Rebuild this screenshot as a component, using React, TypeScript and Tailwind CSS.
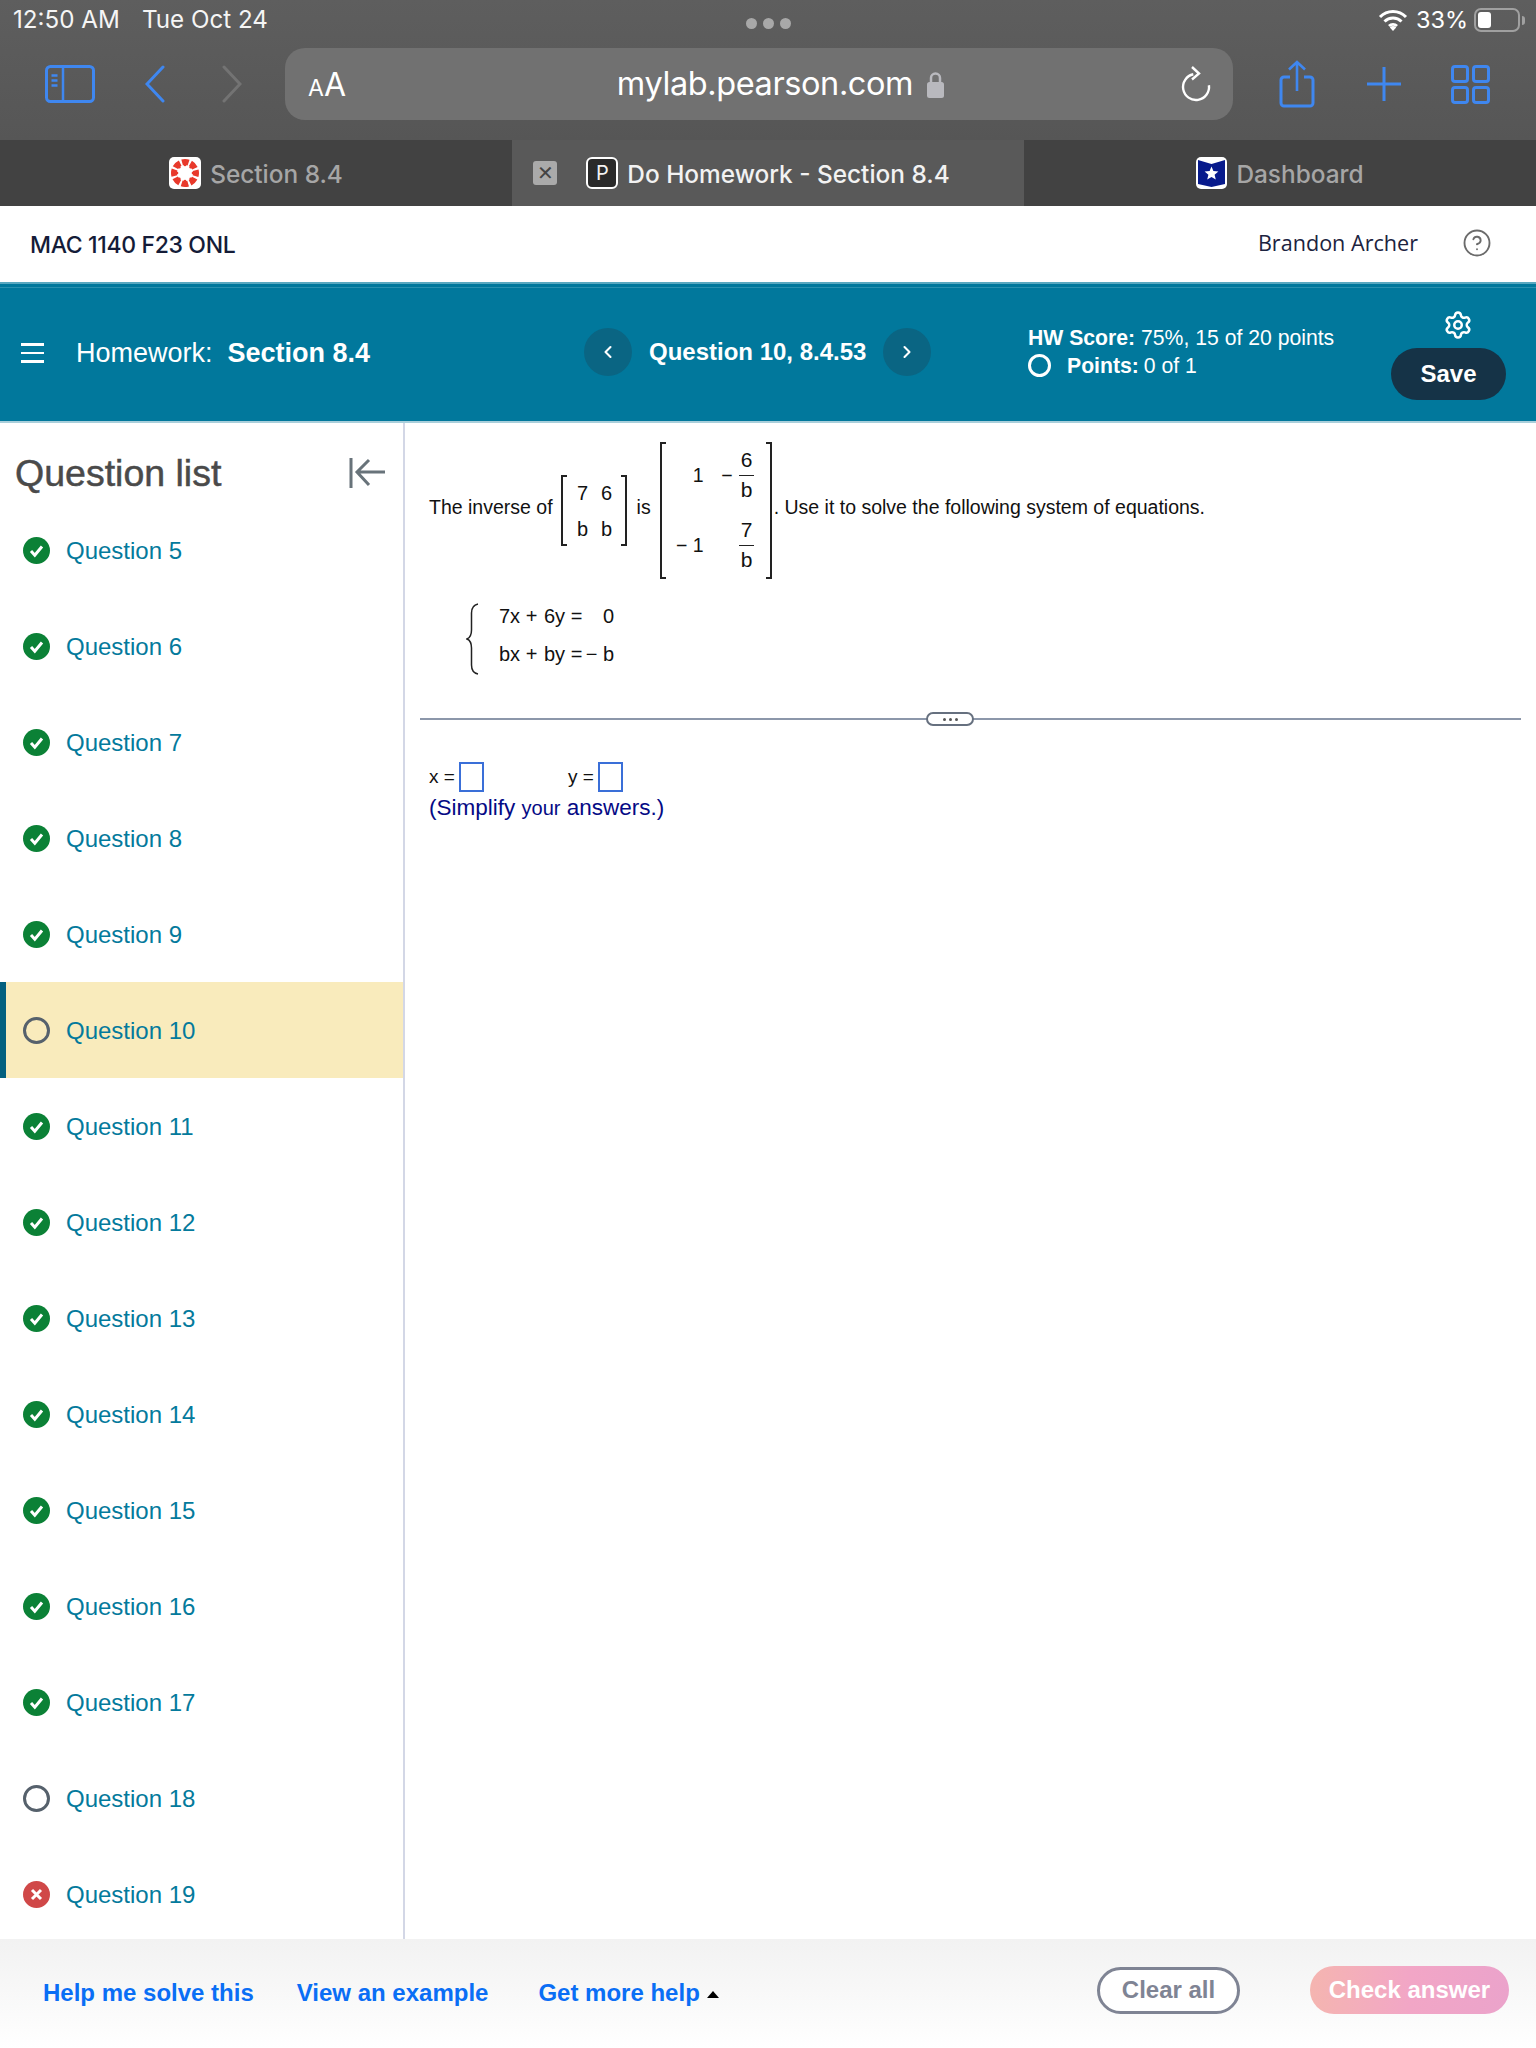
import { ChevronLeft, ChevronRight, CircleHelp, Settings } from "lucide-react";

const questions = [
  { n: 5, status: "done" },
  { n: 6, status: "done" },
  { n: 7, status: "done" },
  { n: 8, status: "done" },
  { n: 9, status: "done" },
  { n: 10, status: "open", current: true },
  { n: 11, status: "done" },
  { n: 12, status: "done" },
  { n: 13, status: "done" },
  { n: 14, status: "done" },
  { n: 15, status: "done" },
  { n: 16, status: "done" },
  { n: 17, status: "done" },
  { n: 18, status: "open" },
  { n: 19, status: "wrong" },
];

const StatusIcon = ({ status }: { status: string }) => {
  if (status === "done") {
    return (
      <svg width="27" height="27" viewBox="0 0 27 27" className="shrink-0">
        <circle cx="13.5" cy="13.5" r="13.5" fill="#0b8136" />
        <path d="M8 14l3.8 4.2L19 9.5" fill="none" stroke="#fff" strokeWidth="3" />
      </svg>
    );
  }
  if (status === "wrong") {
    return (
      <svg width="27" height="27" viewBox="0 0 27 27" className="shrink-0">
        <circle cx="13.5" cy="13.5" r="13.5" fill="#d04848" />
        <path d="M9 9l9 9M18 9l-9 9" fill="none" stroke="#fff" strokeWidth="3" />
      </svg>
    );
  }
  return (
    <svg width="27" height="27" viewBox="0 0 27 27" className="shrink-0">
      <circle cx="13.5" cy="13.5" r="12" fill="none" stroke="#56616c" strokeWidth="3" />
    </svg>
  );
};

const CanvasIcon = () => (
  <div className="w-[32px] h-[32px] rounded-[5px] bg-white flex items-center justify-center">
    <svg width="30" height="30" viewBox="0 0 30 30">
      <circle cx="15" cy="15" r="11" fill="none" stroke="#e8392b" strokeWidth="6" strokeDasharray="6.6 2.04" strokeDashoffset="3.3" />
      <circle cx="15" cy="7" r="1.3" fill="#e8392b" />
      <circle cx="15" cy="23" r="1.3" fill="#e8392b" />
      <circle cx="7" cy="15" r="1.3" fill="#e8392b" />
      <circle cx="23" cy="15" r="1.3" fill="#e8392b" />
      <circle cx="9.3" cy="9.3" r="1.3" fill="#e8392b" />
      <circle cx="20.7" cy="9.3" r="1.3" fill="#e8392b" />
      <circle cx="9.3" cy="20.7" r="1.3" fill="#e8392b" />
      <circle cx="20.7" cy="20.7" r="1.3" fill="#e8392b" />
    </svg>
  </div>
);

const DashboardIcon = () => (
  <div className="w-[31px] h-[32px] rounded-[5px] bg-white flex items-center justify-center">
    <svg width="31" height="32" viewBox="0 0 31 32">
      <path d="M2 3l13.5 4L29 3v24l-13.5 3L2 27z" fill="#071a8c" />
      <path d="M15.5 9.5l1.9 4.6 5 .4-3.8 3.2 1.2 4.8-4.3-2.6-4.3 2.6 1.2-4.8-3.8-3.200 5-.4z" fill="#fff" />
    </svg>
  </div>
);

const Matrix2x2 = () => (
  <div className="flex h-[71px] w-[66px] shrink-0 text-[20px]">
    <div className="w-[6px] border-l-2 border-y-2 border-[#222]" />
    <div className="flex-1 pl-[2px] grid grid-cols-[24px_24px] auto-rows-[36px] content-center justify-center place-items-center">
      <span>7</span>
      <span>6</span>
      <span>b</span>
      <span>b</span>
    </div>
    <div className="w-[6px] border-r-2 border-y-2 border-[#222]" />
  </div>
);

const Frac = ({ top }: { top: string }) => (
  <span className="flex flex-col items-center w-[16px]">
    <span className="leading-[24px] mb-[3px] text-[21px]">{top}</span>
    <span className="w-[15px] h-[1.5px] bg-[#222]" />
    <span className="leading-[27px] text-[21px]">b</span>
  </span>
);

const MatrixInverse = () => (
  <div className="flex h-[137px] w-[112px] shrink-0">
    <div className="w-[6px] border-l-2 border-y-2 border-[#222]" />
    <div className="flex-1 grid grid-cols-[38px_51px] auto-rows-[70px] content-center pr-[11px]">
      <span className="flex items-center justify-end">1</span>
      <span className="flex items-center justify-end gap-[6px]">
        <span>−</span>
        <Frac top="6" />
      </span>
      <span className="flex items-center justify-end">− 1</span>
      <span className="flex items-center justify-end">
        <Frac top="7" />
      </span>
    </div>
    <div className="w-[6px] border-r-2 border-y-2 border-[#222]" />
  </div>
);

const App = () => {
  return (
    <div className="w-[1536px] h-[2048px] flex flex-col overflow-hidden bg-white font-['Liberation_Sans',sans-serif]">
      {/* Safari chrome */}
      <div className="h-[140px] bg-gradient-to-b from-[#5e5e5e] to-[#565656] font-['Inter',sans-serif] text-white">
        <div className="h-[48px] relative flex items-start justify-between pl-[13px] pr-[11px] pt-[6px]">
          <div className="flex gap-[22px] text-[24.2px] leading-[28px] text-[#f5f5f5]">
            <span>12:50 AM</span>
            <span>Tue Oct 24</span>
          </div>
          <div className="absolute left-[746px] top-[18px] flex gap-[6px]">
            <span className="w-[11px] h-[11px] rounded-full bg-[#a8a8a8]" />
            <span className="w-[11px] h-[11px] rounded-full bg-[#a8a8a8]" />
            <span className="w-[11px] h-[11px] rounded-full bg-[#a8a8a8]" />
          </div>
          <div className="flex items-center">
            <svg width="30" height="22" viewBox="0 0 30 22" className="mr-[8px]">
              <path d="M2 8a18 18 0 0 1 26 0M6.5 12.5a12 12 0 0 1 17 0M11 17a6 6 0 0 1 8 0" fill="none" stroke="#fff" strokeWidth="3" />
              <path d="M15 22l-3.2-3.6a4.6 4.6 0 0 1 6.4 0z" fill="#fff" />
            </svg>
            <span className="text-[23.5px] leading-[28px] mr-[6px]">33%</span>
            <div className="w-[46px] h-[24px] border-2 border-[#a0a0a0] rounded-[7px] p-[2px]">
              <div className="w-[13px] h-full bg-white rounded-[3px]" />
            </div>
            <div className="w-[3px] h-[9px] bg-[#a0a0a0] rounded-r-full ml-[2px]" />
          </div>
        </div>
        <div className="h-[72px] flex items-center pl-[45px]">
          <svg width="50" height="38" viewBox="0 0 50 38" className="shrink-0">
            <rect x="1.5" y="1.5" width="47" height="35" rx="4" fill="none" stroke="#3f87f0" strokeWidth="3" />
            <path d="M18 1.5v35M6.5 10.5h6M6.5 15.5h6M6.5 20.5h6" fill="none" stroke="#3f87f0" strokeWidth="2.5" />
          </svg>
          <svg width="20" height="38" viewBox="0 0 20 38" className="ml-[50px] shrink-0">
            <path d="M18 2L2 19l16 17" fill="none" stroke="#3f87f0" strokeWidth="3" strokeLinecap="round" />
          </svg>
          <svg width="20" height="38" viewBox="0 0 20 38" className="ml-[57px] shrink-0">
            <path d="M2 2l16 17L2 36" fill="none" stroke="#737373" strokeWidth="3" strokeLinecap="round" />
          </svg>
          <div className="ml-[43px] w-[948px] h-[72px] rounded-[20px] bg-[#717171] flex items-center pl-[23px] pr-[22px]">
            <span className="flex items-baseline w-[40px] leading-none pt-[2px]">
              <span className="text-[23px]">A</span>
              <span className="text-[32px]">A</span>
            </span>
            <div className="flex-1 flex items-center justify-center pl-[32px]">
              <span className="text-[32.5px] leading-[44px] tracking-[-0.4px]">mylab.pearson.com</span>
              <svg width="17" height="27" viewBox="0 0 17 27" className="ml-[14px]">
                <path d="M4 12V7a4.5 4.5 0 0 1 9 0v5" fill="none" stroke="#b9b9be" strokeWidth="2.5" />
                <rect x="0" y="11" width="17" height="16" rx="2.5" fill="#b9b9be" />
              </svg>
            </div>
            <svg width="30" height="36" viewBox="0 0 30 36" className="shrink-0">
              <path d="M15 8a13 13 0 1 0 13 14" fill="none" stroke="#fff" strokeWidth="2.4" transform="rotate(-12 15 21)" />
              <path d="M11 1l7 6.5-7 6" fill="none" stroke="#fff" strokeWidth="2.4" />
            </svg>
          </div>
          <svg width="36" height="48" viewBox="0 0 36 48" className="ml-[46px] shrink-0">
            <path d="M11 17H5a3 3 0 0 0-3 3v23a3 3 0 0 0 3 3h26a3 3 0 0 0 3-3V20a3 3 0 0 0-3-3h-6" fill="none" stroke="#3f87f0" strokeWidth="3" />
            <path d="M18 2v29M10 9.5L18 2l8 7.5" fill="none" stroke="#3f87f0" strokeWidth="2.6" />
          </svg>
          <svg width="34" height="34" viewBox="0 0 34 34" className="ml-[52px] shrink-0">
            <path d="M17 0v34M0 17h34" fill="none" stroke="#3f87f0" strokeWidth="3" />
          </svg>
          <svg width="39" height="39" viewBox="0 0 39 39" className="ml-[50px] shrink-0">
            <rect x="1.5" y="1.5" width="15" height="15" rx="2.5" fill="none" stroke="#3f87f0" strokeWidth="3" />
            <rect x="22.5" y="1.5" width="15" height="15" rx="2.5" fill="none" stroke="#3f87f0" strokeWidth="3" />
            <rect x="1.5" y="22.5" width="15" height="15" rx="2.5" fill="none" stroke="#3f87f0" strokeWidth="3" />
            <rect x="22.5" y="22.5" width="15" height="15" rx="2.5" fill="none" stroke="#3f87f0" strokeWidth="3" />
          </svg>
        </div>
      </div>

      {/* Tabs */}
      <div className="h-[66px] grid grid-cols-3 font-['Inter',sans-serif] text-[24.4px] font-medium">
        <div className="bg-[#424242] flex items-center justify-center gap-[9px] text-[#a6a6a6]">
          <CanvasIcon />
          <span className="pt-[2px]">Section 8.4</span>
        </div>
        <div className="bg-[#595959] relative flex items-center justify-center gap-[9px] text-[#f2f2f2]">
          <span className="absolute left-[21px] top-[21px] w-[24px] h-[24px] rounded-[3px] bg-[#aaaaaa] text-[#444] text-[20px] leading-[24px] text-center">✕</span>
          <span className="w-[32px] h-[32px] rounded-[6px] border-2 border-white bg-[#2a2a2a] text-[20px] font-normal leading-[28px] text-center">P</span>
          <span className="pt-[2px]">Do Homework - Section 8.4</span>
        </div>
        <div className="bg-[#424242] flex items-center justify-center gap-[9px] text-[#a6a6a6]">
          <DashboardIcon />
          <span className="pt-[2px]">Dashboard</span>
        </div>
      </div>

      {/* Course header */}
      <div className="h-[76px] flex items-center justify-between pl-[30px] pr-[44px]">
        <span className="pt-[2px] font-['Inter',sans-serif] font-medium text-[23px] text-[#141c38] tracking-[-0.35px]">MAC 1140 F23 ONL</span>
        <div className="flex items-center gap-[44px] pb-[2px]">
          <span className="font-['Open_Sans',sans-serif] text-[21.6px] text-[#1c2340]">Brandon Archer</span>
          <CircleHelp size={30} strokeWidth={1.5} className="text-[#6b6b6b]" />
        </div>
      </div>

      {/* Homework bar */}
      <div className="h-[141px] bg-[#01789c] border-t-2 border-b-2 border-t-[#5aa8c0] border-b-[#a9cfdb] text-white flex items-center relative">
        <div className="absolute left-0 right-0 top-[3px] h-[1px] bg-[#2a90ae]" />
        <div className="w-[584px] flex items-center pl-[21px] pt-[1px]">
          <div className="w-[23px] flex flex-col gap-[6px]">
            <span className="h-[2.5px] bg-white" />
            <span className="h-[2.5px] bg-white" />
            <span className="h-[2.5px] bg-white" />
          </div>
          <span className="ml-[32px] text-[27px]">Homework:</span>
          <span className="ml-[15px] text-[27px] font-bold">Section 8.4</span>
        </div>
        <div className="w-[444px] flex items-center -mt-[2px]">
          <button className="w-[48px] h-[48px] rounded-full bg-[#0a6583] flex items-center justify-center">
            <ChevronLeft size={20} strokeWidth={2.5} />
          </button>
          <span className="ml-[17px] w-[217px] text-[24px] font-bold whitespace-nowrap">Question 10, 8.4.53</span>
          <button className="ml-[17px] w-[48px] h-[48px] rounded-full bg-[#0a6583] flex items-center justify-center">
            <ChevronRight size={20} strokeWidth={2.5} />
          </button>
        </div>
        <div className="w-[363px] text-[21.2px] leading-[28px] -mt-[2px]">
          <div>
            <b>HW Score:</b> 75%, 15 of 20 points
          </div>
          <div className="flex items-center">
            <span className="w-[23px] h-[23px] rounded-full border-[3px] border-white mr-[16px]" />
            <b>Points:</b>
            <span className="ml-[5px]">0 of 1</span>
          </div>
        </div>
        <div className="flex flex-col items-start pt-[5px]">
          <Settings size={30} strokeWidth={2} className="ml-[52px] mb-[8px]" />
          <button className="w-[115px] h-[52px] rounded-full bg-[#153347] text-[24px] font-bold">Save</button>
        </div>
      </div>

      {/* Body */}
      <div className="h-[1516px] flex overflow-hidden">
        <aside className="w-[405px] shrink-0 border-r-2 border-[#d3d7e6] flex flex-col overflow-hidden">
          <div className="h-[79px] shrink-0 pt-[21px] flex items-center justify-between pl-[15px] pr-[18px]">
            <span className="text-[37.5px] text-[#4a4a4a] [-webkit-text-stroke:0.5px_#4a4a4a]">Question list</span>
            <svg width="36" height="32" viewBox="0 0 36 32">
              <path d="M2 1v30M36 15H9M20 3L8 15l12 13" fill="none" stroke="#68737a" strokeWidth="3" />
            </svg>
          </div>
          {questions.map((q) => (
            <div
              key={q.n}
              className={
                q.current
                  ? "h-[96px] shrink-0 flex items-center gap-[16px] border-l-[6px] border-[#03607f] pl-[17px] bg-[#f9ebbc]"
                  : "h-[96px] shrink-0 flex items-center gap-[16px] pl-[23px]"
              }
            >
              <StatusIcon status={q.status} />
              <span className="pt-[2px] text-[24px] text-[#047a9c]">Question {q.n}</span>
            </div>
          ))}
        </aside>

        <main className="flex-1 pt-[19px] text-[19.5px] text-[#111]">
          <div className="flex items-center ml-[24px] whitespace-nowrap">
            <span className="-mt-[5px]">The inverse of</span>
            <div className="ml-[8px]">
              <Matrix2x2 />
            </div>
            <span className="-mt-[5px] ml-[10px]">is</span>
            <div className="ml-[9px]">
              <MatrixInverse />
            </div>
            <span className="-mt-[5px] ml-[2px]">. Use it to solve the following system of equations.</span>
          </div>

          <div className="flex items-center ml-[61px] mt-[24px] h-[72px]">
            <svg width="14" height="72" viewBox="0 0 14 72">
              <path d="M12 1C7 2 5.5 5 5.5 10v17c0 5-2 8-4.5 9 2.5 1 4.5 4 4.5 9v17c0 5 1.5 8 6.5 9" fill="none" stroke="#222" strokeWidth="1.5" />
            </svg>
            <div className="ml-[19px] -mt-[9px] grid grid-cols-[45px_50px_20px] auto-rows-[38px] items-center whitespace-pre text-[20px]">
              <span>7x +</span>
              <span>6y =</span>
              <span className="text-right">0</span>
              <span>bx +</span>
              <span>by =</span>
              <span className="text-right -ml-[12px]">− b</span>
            </div>
          </div>

          <div className="relative ml-[15px] w-[1101px] mt-[43px] h-[2px] bg-[#8c97aa]">
            <div className="absolute left-[506px] -top-[6px] w-[48px] h-[14px] rounded-full border-2 border-[#66707f] bg-white flex items-center justify-center gap-[3px]">
              <span className="w-[3px] h-[3px] rounded-full bg-[#555]" />
              <span className="w-[3px] h-[3px] rounded-full bg-[#555]" />
              <span className="w-[3px] h-[3px] rounded-full bg-[#555]" />
            </div>
          </div>

          <div className="flex items-center ml-[24px] mt-[42px] h-[30px] text-[19px]">
            <span className="w-[30px]">x =</span>
            <span className="w-[25px] h-[30px] border-2 border-[#3a6fd8]" />
            <span className="ml-[84px] w-[30px]">y =</span>
            <span className="w-[25px] h-[30px] border-2 border-[#3a6fd8]" />
          </div>
          <div className="ml-[24px] pt-[1px] text-[22.5px] leading-[30px] text-[#050a85]">
            (Simplify <span className="text-[20px]">your</span> answers.)
          </div>
        </main>
      </div>

      {/* Footer */}
      <div className="h-[109px] bg-gradient-to-b from-[#f2f2f2] to-white flex items-center pl-[43px] pr-[27px] text-[24px] font-bold">
        <span className="-mt-[2px] text-[#0a6ef5]">Help me solve this</span>
        <span className="-mt-[2px] ml-[43px] text-[#0a6ef5]">View an example</span>
        <span className="-mt-[2px] ml-[50px] text-[#0a6ef5]">Get more help</span>
        <span className="ml-[7px] mt-[2px] w-0 h-0 border-x-[6px] border-x-transparent border-b-[7px] border-b-black" />
        <div className="ml-auto flex items-center gap-[70px] pb-[7px]">
          <button className="w-[143px] h-[47px] rounded-full border-[3px] border-[#7f8494] text-[#7f8494] bg-white">Clear all</button>
          <button className="w-[199px] h-[48px] rounded-full bg-gradient-to-r from-[#f5b5b0] via-[#f2a6c6] to-[#eba3cb] text-white">Check answer</button>
        </div>
      </div>
    </div>
  );
};

export default App;
